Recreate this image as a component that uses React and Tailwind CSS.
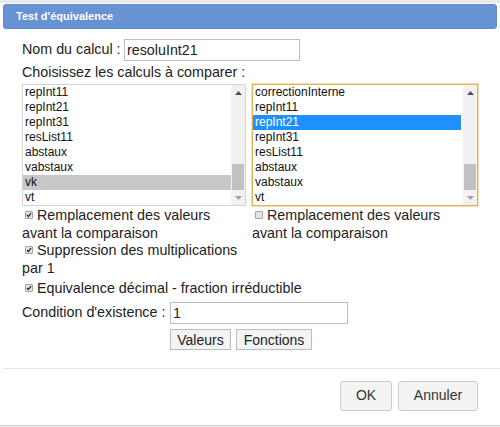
import React from 'react';

const leftItems = ['repInt11', 'repInt21', 'repInt31', 'resList11', 'abstaux', 'vabstaux', 'vk', 'vt'];
const rightItems = ['correctionInterne', 'repInt11', 'repInt21', 'repInt31', 'resList11', 'abstaux', 'vabstaux', 'vt'];

const Check = ({ checked }) => (
  <span className="relative -top-[1px] inline-block align-middle w-[8px] h-[8px] ml-[3px] mr-[4px] rounded-[1px] border border-[#a4a4a4] bg-[#e4e4e4]">
    {checked && (
      <svg viewBox="0 0 6 6" className="absolute inset-0 w-full h-full">
        <path d="M0.9 3 L2.4 4.5 L5.1 1.1" stroke="#2a2a2a" strokeWidth="1.3" fill="none" />
      </svg>
    )}
  </span>
);

const Scrollbar = () => (
  <div className="w-[14px] h-full bg-[#f1f1f1] flex flex-col">
    <div className="h-[15px] flex items-center justify-center">
      <svg width="7" height="4" viewBox="0 0 7 4">
        <path d="M0 4 L3.5 0 L7 4 Z" fill="#505050" />
      </svg>
    </div>
    <div className="flex-1 flex flex-col justify-end px-[1px]">
      <div className="h-[26px] bg-[#c1c1c1]" />
    </div>
    <div className="h-[15px] flex items-center justify-center">
      <svg width="7" height="4" viewBox="0 0 7 4">
        <path d="M0 0 L3.5 4 L7 0 Z" fill="#a3a3a3" />
      </svg>
    </div>
  </div>
);

const ListBox = ({ items, selected, focused }) => (
  <div
    className={`h-[122px] flex bg-white border ${
      focused ? 'border-[#e6b357] shadow-[0_0_0_1px_#f4dcae]' : 'border-[#d4d4d4]'
    }`}
  >
    <div className="flex-1 text-[12px] leading-[15px] text-[#111]">
      {items.map((item, i) => (
        <div
          key={item}
          className={`h-[15px] pl-[2px] ${
            i === selected ? (focused ? 'bg-[#1e90ff] text-white mr-[2px]' : 'bg-[#c8c8c8]') : ''
          }`}
        >
          {item}
        </div>
      ))}
    </div>
    <Scrollbar />
  </div>
);

const Button = ({ children, className }) => (
  <button className={`border border-[#bcbcbc] bg-[#f3f3f3] text-[14px] text-[#222] ${className}`}>
    {children}
  </button>
);

export default function App() {
  return (
    <div className="w-[500px] h-[427px] bg-[#e9e9e9] pt-[3px] font-['Liberation_Sans',Arial,sans-serif] text-[#222]">
      <div className="h-[423px] bg-white border-b border-[#d2d2d2] pt-[1px] flex flex-col">
        {/* title bar */}
        <div className="mx-[3px] h-[25px] rounded-[3px] bg-[#6792d4] border border-[#5e8ad0] flex items-center pl-[12px] text-white text-[11px] font-bold">
          Test d'équivalence
        </div>

        <div className="px-[22px] text-[14.3px]">
          <div className="mt-[10px] flex items-center h-[22px]">
            <span className="w-[102px]">Nom du calcul :</span>
            <div className="w-[176px] h-[22px] border border-[#bdbdbd] pl-[2px] leading-[20px]">resoluInt21</div>
          </div>
          <div className="mt-[2px] leading-[18px]">Choisissez les calculs à comparer :</div>

          <div className="mt-[3px] grid grid-cols-[224px_226px] gap-x-[6px] leading-[17.5px]">
            <ListBox items={leftItems} selected={6} />
            <ListBox items={rightItems} selected={2} focused />

            <div className="pt-[1px]">
              <Check checked />
              Remplacement des valeurs avant la comparaison
            </div>
            <div className="pt-[1px] pr-[4px]">
              <Check />
              Remplacement des valeurs avant la comparaison
            </div>

            <div className="pr-[4px]">
              <Check checked />
              Suppression des multiplications par 1
            </div>
            <div />
          </div>

          <div className="mt-[3px] leading-[17.5px]">
            <Check checked />
            Equivalence décimal - fraction irréductible
          </div>

          <div className="mt-[4px] flex items-center h-[22px]">
            <span className="w-[148px]">Condition d'existence :</span>
            <div className="w-[178px] h-[22px] border border-[#bdbdbd] pl-[2px] leading-[20px]">1</div>
          </div>
          <div className="mt-[5px] pl-[148px] flex gap-[5px]">
            <Button className="w-[61px] h-[21px]">Valeurs</Button>
            <Button className="w-[76px] h-[21px]">Fonctions</Button>
          </div>
        </div>

        <div className="mt-[18px] ml-[3px] h-px bg-[#e5e5e5]" />

        <div className="pt-[12px] pr-[22px] flex justify-end gap-[6px]">
          <Button className="w-[52px] h-[30px] rounded-[3px] border-[#cccccc] text-[#333]">OK</Button>
          <Button className="w-[80px] h-[30px] rounded-[3px] border-[#cccccc] text-[#333]">Annuler</Button>
        </div>
      </div>
    </div>
  );
}
